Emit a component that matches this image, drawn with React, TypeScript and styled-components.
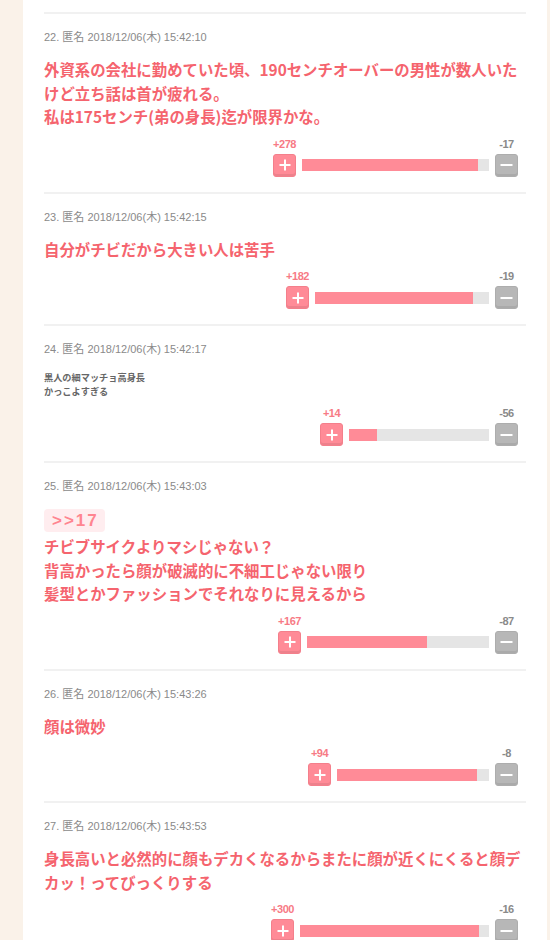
import React from "react";
import styled, { createGlobalStyle } from "styled-components";

const GlobalStyle = createGlobalStyle`
  html, body {
    margin: 0;
    padding: 0;
    overflow: hidden;
    background: #faf2e9;
  }
  body {
    font-family: "Liberation Sans", "Noto Sans CJK JP", sans-serif;
  }
`;

const Page = styled.div`
  display: flex;
  min-height: 940px;
  padding: 0 3px 0 23px;
`;

const Panel = styled.main`
  flex: 1;
  background: #ffffff;
  padding: 12px 21px 0;
`;

const Item = styled.article`
  display: flex;
  flex-direction: column;
  border-top: 2px solid #f1f1f1;
  padding: 15px 0 15px;
`;

const Meta = styled.div`
  font-family: "Liberation Sans", "Noto Sans CJK JP", sans-serif;
  font-size: 11px;
  line-height: 16px;
  color: #8a8a8a;
`;

const Body = styled.div<{ $small?: boolean }>`
  margin-top: 13px;
  font-family: "Noto Sans CJK JP", sans-serif;
  font-weight: 700;
  font-size: ${(p) => (p.$small ? "9.2px" : "15.4px")};
  line-height: ${(p) => (p.$small ? "14px" : "23.5px")};
  color: ${(p) => (p.$small ? "#666666" : "#f5646e")};
`;

const Anchor = styled.span`
  display: block;
  width: fit-content;
  margin: 2px 0 3px;
  padding: 2px 6px 2px 8px;
  border-radius: 4px;
  background: #ffedef;
  color: #ff8590;
  font-family: "Liberation Sans", sans-serif;
  font-weight: 700;
  font-size: 17px;
  line-height: 19px;
  letter-spacing: 2px;
`;

const Vote = styled.div`
  align-self: flex-end;
  margin: 8px 8px 0 0;
  display: grid;
  grid-template-columns: 23px auto 23px;
  grid-template-rows: 14px 23px;
  column-gap: 6px;
  row-gap: 3px;
  align-items: center;
`;

const Count = styled.span<{ $kind: "plus" | "minus" }>`
  grid-row: 1;
  grid-column: ${(p) => (p.$kind === "plus" ? 1 : 3)};
  justify-self: center;
  white-space: nowrap;
  font-family: "Liberation Sans", sans-serif;
  font-weight: 700;
  font-size: 11px;
  line-height: 14px;
  letter-spacing: -0.5px;
  color: ${(p) => (p.$kind === "plus" ? "#f77a85" : "#8a8a8a")};
`;

const VoteButton = styled.button<{ $kind: "plus" | "minus" }>`
  grid-row: 2;
  grid-column: ${(p) => (p.$kind === "plus" ? 1 : 3)};
  box-sizing: border-box;
  width: 23px;
  height: 23px;
  padding: 0;
  display: flex;
  align-items: center;
  justify-content: center;
  border: 1px solid ${(p) => (p.$kind === "plus" ? "#f47f8b" : "#adadad")};
  border-radius: 3px;
  background: ${(p) => (p.$kind === "plus" ? "#ff8b97" : "#b7b7b7")};
  box-shadow: inset 0 -2px 0 rgba(0, 0, 0, 0.07);
  cursor: pointer;
`;

const Track = styled.div`
  grid-row: 2;
  grid-column: 2;
  height: 12px;
  background: #e5e5e5;
  display: flex;
`;

const Fill = styled.div`
  height: 100%;
  background: #ff8b97;
`;

const PlusIcon = () => (
  <svg width="12" height="12" viewBox="0 0 12 12" aria-hidden="true">
    <path d="M6 0.5v11M0.5 6h11" stroke="#fff" strokeWidth="2" fill="none" />
  </svg>
);

const MinusIcon = () => (
  <svg width="13" height="12" viewBox="0 0 13 12" aria-hidden="true">
    <path d="M0.5 6h12" stroke="#fff" strokeWidth="2" fill="none" />
  </svg>
);

type Comment = {
  no: number;
  time: string;
  anchor?: string;
  lines: string[];
  small?: boolean;
  plus: number;
  minus: number;
};

const comments: Comment[] = [
  {
    no: 22,
    time: "2018/12/06(木) 15:42:10",
    lines: [
      "外資系の会社に勤めていた頃、190センチオーバーの男性が数人いたけど立ち話は首が疲れる。",
      "私は175センチ(弟の身長)迄が限界かな。",
    ],
    plus: 278,
    minus: 17,
  },
  {
    no: 23,
    time: "2018/12/06(木) 15:42:15",
    lines: ["自分がチビだから大きい人は苦手"],
    plus: 182,
    minus: 19,
  },
  {
    no: 24,
    time: "2018/12/06(木) 15:42:17",
    lines: ["黒人の細マッチョ高身長", "かっこよすぎる"],
    small: true,
    plus: 14,
    minus: 56,
  },
  {
    no: 25,
    time: "2018/12/06(木) 15:43:03",
    anchor: ">>17",
    lines: [
      "チビブサイクよりマシじゃない？",
      "背高かったら顔が破滅的に不細工じゃない限り",
      "髪型とかファッションでそれなりに見えるから",
    ],
    plus: 167,
    minus: 87,
  },
  {
    no: 26,
    time: "2018/12/06(木) 15:43:26",
    lines: ["顔は微妙"],
    plus: 94,
    minus: 8,
  },
  {
    no: 27,
    time: "2018/12/06(木) 15:43:53",
    lines: [
      "身長高いと必然的に顔もデカくなるからまたに顔が近くにくると顔デカッ！ってびっくりする",
    ],
    plus: 300,
    minus: 16,
  },
];

const VoteBar = ({ plus, minus }: { plus: number; minus: number }) => {
  const total = plus + minus;
  const width = Math.round(32.4 * Math.log(total) + 2.3);
  const ratio = total > 0 ? (plus / total) * 100 : 0;
  return (
    <Vote>
      <Count $kind="plus">+{plus}</Count>
      <Count $kind="minus">-{minus}</Count>
      <VoteButton $kind="plus" aria-label="plus">
        <PlusIcon />
      </VoteButton>
      <Track style={{ width }}>
        <Fill style={{ width: `${ratio}%` }} />
      </Track>
      <VoteButton $kind="minus" aria-label="minus">
        <MinusIcon />
      </VoteButton>
    </Vote>
  );
};

export default function App() {
  return (
    <>
      <GlobalStyle />
      <Page>
        <Panel>
          {comments.map((c) => (
            <Item key={c.no}>
              <Meta>
                {c.no}. 匿名 {c.time}
              </Meta>
              <Body $small={c.small}>
                {c.anchor && <Anchor>{c.anchor}</Anchor>}
                {c.lines.map((l, i) => (
                  <React.Fragment key={i}>
                    {i > 0 && <br />}
                    {l}
                  </React.Fragment>
                ))}
              </Body>
              <VoteBar plus={c.plus} minus={c.minus} />
            </Item>
          ))}
        </Panel>
      </Page>
    </>
  );
}
